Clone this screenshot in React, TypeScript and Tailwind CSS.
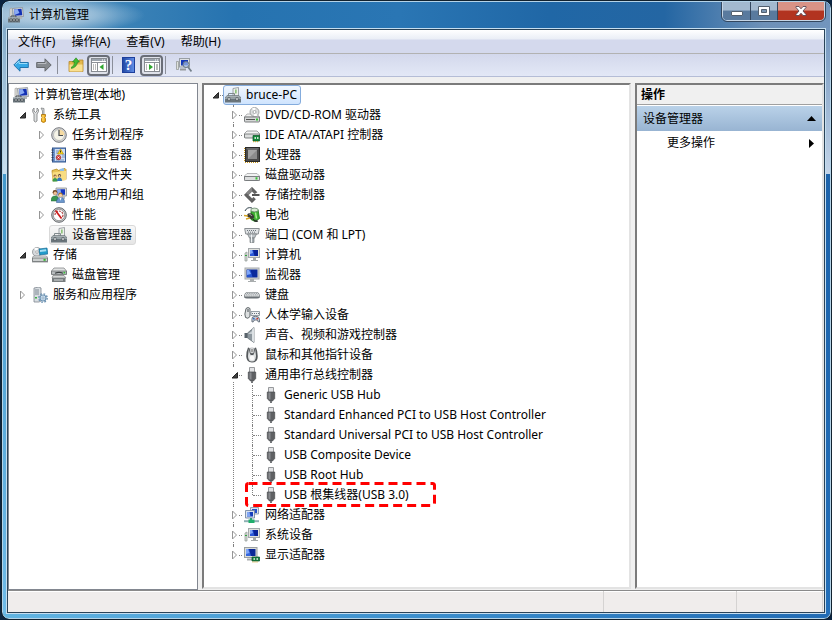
import { useState, type ReactNode } from "react";

type IconName = keyof typeof icons;

type TreeItem = {
  label: string;
  icon: IconName;
  children?: TreeItem[];
  open?: boolean;
  selected?: "gray" | "blue";
  marked?: boolean;
};

const bigScreen = (
  <>
    <rect x="1" y="1" width="14" height="11" fill="#d9dbd6" stroke="#a3a8ab" />
    <rect x="2.500" y="2.500" width="11" height="8" fill="#0a2a9c" />
    <path d="M3 3h3.500l2 7H3z" fill="#2453cf" />
    <path d="M3 3h2l2 4-4 1z" fill="#7fa6f8" />
    <path d="M6 12h4v2h2v1H4v-1h2z" fill="#a9adae" />
  </>
);

const towerScreen = (
  <>
    <rect x="4.500" y="1.500" width="11" height="9" fill="#dfe1dc" stroke="#a3a8ab" />
    <rect x="6" y="3" width="8" height="6" fill="#08239a" />
    <path d="M6 3h3l1.500 6H6z" fill="#2a58d8" />
    <path d="M6 3h2l1 3-3 1z" fill="#7fa6f8" />
    <path d="M9 11h3v2h2v1H7v-1h2z" fill="#a4a8a9" />
    <path d="M1 6l2-1v9H1z" fill="#d6dad4" stroke="#8e9592" strokeWidth=".7" />
    <path d="M1 8h2v1H1z" fill="#2fa83c" />
  </>
);

const manageIcon = (
  <>
    <path d="M2 1.500l2-.5v9H2z" fill="#e6e6e0" stroke="#a0a0a0" strokeWidth=".7" />
    <path d="M4.500 1.500l10-1 1 9-10 .5z" fill="#d9dcdf" stroke="#8b9096" strokeWidth=".8" />
    <path d="M6 2.500l7.500-.8.8 6.500-7.500.6z" fill="#1331b4" />
    <path d="M6 2.500l3.500-.4 2 4-5 2z" fill="#8aaaf2" />
    <path d="M11 10h3v2h-3z" fill="#b4b7b9" />
    <path d="M3 10.500V9h5v1.500" fill="none" stroke="#4b5358" />
    <path d="M0 10.500h12v5H0z" fill="#6b767c" />
    <path d="M0 11h12" stroke="#b7c0c5" />
    <path d="M2 12h2v2H2zM5 12h2v2H5zM8 12h2v2H8z" fill="#cfd6d9" stroke="#2c3337" strokeWidth=".5" />
  </>
);

const icons = {
  manage: manageIcon,
  tools: (
    <>
      <path d="M2 1v3l1.500 1.500L5 4V1q2 1 1.500 3.500L5 7v7q-1.500 2-3 0V7L.8 5Q0 2.500 2 1z" fill="#dfe1e2" stroke="#77797b" strokeWidth=".8" />
      <path d="M9 1l3 .5v6h-1.500V4z" fill="#d4d6d8" stroke="#797b7d" strokeWidth=".7" />
      <path d="M9.500 7.500h4v2l-.7 1 .7 1v3q-2 2-4 0v-3l.7-1-.7-1z" fill="#f2b11e" stroke="#a86f08" strokeWidth=".8" />
      <path d="M11 8v6" stroke="#ffe07a" />
    </>
  ),
  clock: (
    <>
      <circle cx="8" cy="8" r="7.300" fill="#d5d7d9" stroke="#77797d" />
      <circle cx="8" cy="8" r="5.500" fill="#f5f3e7" stroke="#a5a5a5" strokeWidth=".6" />
      <path d="M8 8V2.500a5.500 5.500 0 0 1 5.500 5.500z" fill="#f6dba2" />
      <path d="M8 3v5.500h4" fill="none" stroke="#454a50" strokeWidth="1.200" />
    </>
  ),
  log: (
    <>
      <rect x="1.500" y="1" width="13" height="14" fill="#6b91cb" stroke="#35588f" />
      <rect x="4" y="2" width="10" height="12" fill="#cfdef2" />
      <path d="M5 4h3M5 6h2M11 8h3M11 10h3M5 13h8" stroke="#6181b6" strokeWidth=".8" />
      <path d="M9.500 2l3 5h-6z" fill="#ffdb1d" stroke="#a98300" strokeWidth=".6" />
      <path d="M9.500 3.500v2" stroke="#222" strokeWidth=".9" />
      <circle cx="7.500" cy="10.500" r="2.300" fill="#d93838" stroke="#8d1616" strokeWidth=".5" />
      <path d="M6.500 9.500l2 2m0-2l-2 2" stroke="#fff" strokeWidth=".8" />
      <path d="M.5 3h2M.5 5.500h2M.5 8h2M.5 10.500h2M.5 13h2" stroke="#333f57" />
    </>
  ),
  share: (
    <>
      <path d="M1 3.500L6 2l1 1.500 7-2 1 1v10L2 14z" fill="#e8c354" stroke="#b58c22" strokeWidth=".8" />
      <path d="M9 2l4-1v3H9z" fill="#8fc0e8" />
      <path d="M1.500 5.500L15 3.800v9.200L1.500 14z" fill="#f8dd82" />
      <circle cx="4" cy="9" r="1.500" fill="#7a5227" />
      <circle cx="4.200" cy="9.500" r="1" fill="#efc6a0" />
      <path d="M1.500 14.500q0-3.500 2.500-3.500t2.500 3.500z" fill="#3a9b4c" />
      <circle cx="8.500" cy="8.500" r="1.500" fill="#523b28" />
      <circle cx="8.500" cy="9" r="1" fill="#efc6a0" />
      <path d="M6 14q0-3.500 2.500-3.500T11 14z" fill="#3476bd" />
    </>
  ),
  users: (
    <>
      <path d="M5 1h10.500v8H5z" fill="#d9dbdc" stroke="#8a8f95" strokeWidth=".8" />
      <path d="M6.500 2.300H14v5.500H6.500z" fill="#1538c2" />
      <path d="M6.500 2.300h3l1 5.500h-4z" fill="#8cabf2" />
      <path d="M11 9h3v3h-3z" fill="#b9bcbe" />
      <circle cx="4" cy="5.500" r="2.400" fill="#6d4523" />
      <circle cx="4.200" cy="6.300" r="1.700" fill="#eebf95" />
      <path d="M0 14q0-5 4-5t4 5z" fill="#3a9550" stroke="#1f6a35" strokeWidth=".5" />
      <circle cx="9.500" cy="7.800" r="2.200" fill="#a87729" />
      <circle cx="9.500" cy="8.400" r="1.600" fill="#f4cfa6" />
      <path d="M5.500 15.500q0-5 4-5t4 5z" fill="#6b97cc" stroke="#264f88" strokeWidth=".5" />
      <path d="M8.500 10.700h2l-1 3z" fill="#fff" />
    </>
  ),
  gauge: (
    <>
      <circle cx="8" cy="8" r="7.300" fill="#c9cccd" stroke="#65686b" />
      <circle cx="8" cy="8" r="5.700" fill="#fff" stroke="#6a6a6a" strokeWidth=".6" />
      <path d="M4 8a4 4 0 0 1 8 0M12 8a4 4 0 0 1-1.500 3" fill="none" stroke="#b04848" strokeWidth="1.200" strokeDasharray="2 1" />
      <path d="M4.500 3.500l6 8" stroke="#cc1c1c" strokeWidth="1.700" />
    </>
  ),
  devices: (
    <>
      <path d="M8 1.500L13.500.5V10H8z" fill="#eef0ee" stroke="#8b9194" strokeWidth=".8" />
      <rect x="10" y="2.500" width="1.700" height="4" fill="#8fc47c" />
      <path d="M3.500 9V6.500h6V9" fill="none" stroke="#818a8d" />
      <path d="M2 8.500h12l2 2.500H0z" fill="#a9b2b6" stroke="#6c757a" strokeWidth=".7" />
      <path d="M0 11h16v4.500H0z" fill="#6a757b" />
      <path d="M0 11.500h16" stroke="#98a3a8" />
      <path d="M3 10.500h2v3H3zM11 10.500h2v3h-2z" fill="#e1e5e6" stroke="#434c50" strokeWidth=".6" />
    </>
  ),
  storage: (
    <>
      <circle cx="5" cy="5" r="4.500" fill="#d7dadd" stroke="#8b9094" strokeWidth=".8" />
      <path d="M5 5L2 1.500Q4 .2 6 1z" fill="#fff" />
      <circle cx="5" cy="5" r="1.300" fill="#fff" stroke="#898989" strokeWidth=".6" />
      <path d="M7 2l8-1 .8 6-8 1z" fill="#239cca" stroke="#1a6c94" strokeWidth=".7" />
      <path d="M8 3l6-.7.300 2L8 5z" fill="#a9e0f4" />
      <path d="M2 9h12l2 1.500V15H0v-4.500z" fill="#eceded" stroke="#8e9193" strokeWidth=".8" />
      <path d="M.5 11h15v3.500H.5z" fill="#cccfcf" stroke="#6b6e70" strokeWidth=".8" />
      <rect x="11.500" y="11.800" width="2.200" height="2" fill="#35b832" />
    </>
  ),
  disk: (
    <>
      <path d="M3 1h10l2.500 3v3H.5V4z" fill="#e1e3e3" stroke="#85888a" strokeWidth=".8" />
      <path d="M.5 4h15v3.500H.5z" fill="#b8bcbe" stroke="#64686a" strokeWidth=".7" />
      <path d="M4 6.300q4-2 8 0" fill="none" stroke="#3c4042" strokeWidth="1.200" />
      <rect x="12.500" y="4.800" width="1.700" height="1.700" fill="#36bf36" />
      <path d="M2 8.500h11l2 2.500H1z" fill="#d5d7d7" stroke="#7c7f80" strokeWidth=".7" />
      <path d="M1 11h13.500v4H1z" fill="#777c7e" />
      <path d="M3 13h9" stroke="#d9dcdc" />
    </>
  ),
  services: (
    <>
      <path d="M2 1l5-1 2 1v13l-2 1H2z" fill="#d9dee2" stroke="#7d878f" strokeWidth=".8" />
      <path d="M3 3h4M3 5h4M3 7h4" stroke="#74808a" strokeWidth=".9" />
      <rect x="3" y="10" width="2" height="1.500" fill="#3fae45" />
      <circle cx="11" cy="11" r="3" fill="#cfe2f1" stroke="#6e93b3" strokeWidth="1.200" />
      <circle cx="11" cy="11" r="4.200" fill="none" stroke="#6e93b3" strokeWidth="1.400" strokeDasharray="1.700 1.600" />
      <circle cx="11" cy="11" r="1.100" fill="#fff" stroke="#5c83a5" strokeWidth=".6" />
    </>
  ),
  dvd: (
    <>
      <path d="M3 7h10l2.500 3H.5z" fill="#f2f2f2" stroke="#a3a5a6" strokeWidth=".8" />
      <circle cx="10.500" cy="5" r="4.500" fill="#dcdedf" stroke="#909496" strokeWidth=".8" />
      <path d="M10.500 5L8 1.500Q10 .5 11.500 1zM10.500 5l3 3.200Q12 9.500 10 9z" fill="#fff" />
      <circle cx="10.500" cy="5" r="1.500" fill="#fff" stroke="#8a8e90" strokeWidth=".7" />
      <path d="M.5 10h15v4.200q0 .8-.8.8H1.300q-.8 0-.8-.8z" fill="#d5d7d7" stroke="#6f7375" strokeWidth=".9" />
      <path d="M2 12.500h9" stroke="#555" />
      <rect x="12" y="11.500" width="2" height="2" fill="#35c235" />
    </>
  ),
  ide: (
    <>
      <path d="M3 4h10l2.500 2.500v4H.5v-4z" fill="#f2f2f2" stroke="#8b8e8f" strokeWidth=".8" />
      <path d="M.5 7h15v3q0 1-1 1h-13q-1 0-1-1z" fill="#dcdede" stroke="#66696a" strokeWidth=".8" />
      <path d="M9 8.500h6.500v5.500H9z" fill="#138a3b" stroke="#075423" strokeWidth=".7" />
      <path d="M10.500 10h1.500v2h-1.500zM13 10h1.500v2H13z" fill="#c9e3cf" />
      <path d="M9 14.700h6" stroke="#d8a524" strokeDasharray="1 1" />
    </>
  ),
  cpu: (
    <>
      <path d="M.5 1v14M1 15.300h14" stroke="#c9971c" strokeWidth="1.200" strokeDasharray="1 1" />
      <rect x="1.500" y=".5" width="14" height="14" fill="#4a4a4a" stroke="#2b2b2b" />
      <path d="M2 1h13l-3 3H5z" fill="#6b6b6b" />
      <rect x="4" y="3" width="9" height="9" fill="#8b8b8b" />
      <path d="M4 12V3h9z" fill="#a5a5a5" />
    </>
  ),
  drive: (
    <>
      <path d="M3 6.500h10l2.500 2.500v4.500H.5V9z" fill="#f1f2f2" stroke="#a3a5a6" strokeWidth=".8" />
      <path d="M.5 9.500h15v3.200q0 .8-.8.8H1.300q-.8 0-.8-.8z" fill="#dcdede" stroke="#6f7375" strokeWidth=".9" />
      <rect x="11.500" y="10.300" width="2" height="2.200" fill="#35c235" />
    </>
  ),
  controller: (
    <>
      <path d="M8 .3L.3 8 8 15.700l3.500-3.500-2-2L8 11.700 4.300 8 8 4.300l2.500 2.500 2.500-1.500z" fill="#626262" stroke="#454545" strokeWidth=".5" />
      <path d="M8 .3L2 6.300l2.500 1.500L8 4.300z" fill="#868686" />
      <path d="M8 7h7.500v2H8z" fill="#555" />
    </>
  ),
  battery: (
    <>
      <path d="M1 4Q3-.5 8 1" fill="none" stroke="#30404a" />
      <path d="M7 3.500l7-1 1.500 9-4.500 3-4-2z" fill="#3cae31" stroke="#187012" strokeWidth=".8" />
      <ellipse cx="10.500" cy="3" rx="3.700" ry="1.900" fill="#d9ecd4" stroke="#53765a" strokeWidth=".7" />
      <path d="M11.500 5.500l1 6" stroke="#a8ee92" strokeWidth="1.500" />
      <path d="M4 6.500q4-1 5.500 1.500T9 11.500q-2 1-3 0L2.500 9z" fill="#3a3935" />
      <path d="M5.500 7.500q2 0 2.500 1.500" stroke="#a5a5a0" fill="none" />
      <path d="M0 8.500l4 .5M2 12l4-1" stroke="#d6a524" strokeWidth="1.500" />
      <path d="M9 12q2 3 5 2" fill="none" stroke="#272727" strokeWidth="1.300" />
    </>
  ),
  port: (
    <>
      <path d="M.7 1.500h14.600l-1 5.500H1.700z" fill="#dfe2e4" stroke="#8a8f93" />
      <path d="M3 3.500h10M4 5.200h8" stroke="#6d757c" strokeDasharray="1 1" />
      <path d="M3.500 7h9l-2 4h-5z" fill="#bfc5c9" stroke="#787e82" strokeWidth=".8" />
      <path d="M6 11h4v4.500H6z" fill="#a3abb0" stroke="#777d80" strokeWidth=".7" />
      <path d="M7.500 7.500v8" stroke="#f1f3f4" />
    </>
  ),
  computer: towerScreen,
  monitor: bigScreen,
  keyboard: (
    <>
      <path d="M3 5h10q3 1 3 5.200-1 1.300-3 1.300H3Q1 11.500 0 10.200 0 6 3 5z" fill="#6c7277" />
      <path d="M3 5.500h10q2 1 2.500 4H.5Q1 6.500 3 5.500z" fill="#e3e5e6" />
      <path d="M3 6.500h10M2 7.800h12M1.500 9.100h13" stroke="#8f959a" strokeWidth=".9" strokeDasharray="1 .8" />
    </>
  ),
  hid: (
    <>
      <path d="M2 1.500Q4-.5 6 1.500v8q-2 3-4.500 1Q0 8 2 1.500z" fill="#dde0e1" stroke="#5f6669" />
      <path d="M4 2v3" stroke="#454b4e" />
      <path d="M7 4.500h8.500v4H7z" fill="#eef0f2" stroke="#7e8992" strokeWidth=".8" />
      <path d="M8 6.500h7" stroke="#6b7781" strokeDasharray="1 1" />
      <path d="M8.500 10q3-1.500 6 0 1.500 2 1 5-1.500.5-2.500-2h-2.500q-1 2.500-2.500 2-.5-3 .5-5z" fill="#c3cad2" stroke="#55616e" strokeWidth=".8" />
      <circle cx="9.800" cy="11.700" r=".9" fill="#2d66c9" />
      <circle cx="13.300" cy="11.700" r=".9" fill="#c93a31" />
    </>
  ),
  sound: (
    <>
      <path d="M.5 6h3v5h-3z" fill="#59636b" />
      <path d="M3.500 6L10 .5v15L3.500 11z" fill="#8d979e" stroke="#5e686f" strokeWidth=".7" />
      <path d="M8 2.500l2-2v15l-2-2z" fill="#dce1e4" />
      <path d="M4 7l4-3v3z" fill="#c7ced2" />
    </>
  ),
  mouse: (
    <>
      <path d="M4 .5Q2 5 2.300 10T8 15.500q5.500 0 5.700-5.500T12 .5L10.500 1 9.500 5h-3L5.500 1z" fill="#54585b" />
      <path d="M4.800 2L4 9q0 5.500 4 5.500T12 9l-.8-7-.9 4-1 2H6.700l-1-2z" fill="#dfe1e2" />
      <path d="M6.500 1h3v5h-3z" fill="#eceded" stroke="#9a9ea1" strokeWidth=".6" />
      <path d="M8 2v3" stroke="#555" />
      <circle cx="8" cy="11" r="2.300" fill="#fafafa" />
    </>
  ),
  usb: (
    <>
      <path d="M5.500.5h5v5h-5z" fill="#e2e3e5" stroke="#8c8e92" strokeWidth=".9" />
      <path d="M4.300 5h7.400v6.500L9.500 14h-3l-2.200-2.500z" fill="#5f6164" stroke="#494b4e" strokeWidth=".7" />
      <path d="M5.500 5.500h2v7h-1l-1-1z" fill="#898b8f" />
      <path d="M7 14h2v2H7z" fill="#747679" />
    </>
  ),
  network: (
    <>
      <path d="M6.500.5h8v6.500h-8z" fill="#dce4ef" stroke="#8697ad" strokeWidth=".9" />
      <path d="M8 2h5v4H8z" fill="#2350cb" />
      <path d="M1.500 3.500h9v7.500h-9z" fill="#dce4ef" stroke="#7789a2" strokeWidth=".9" />
      <path d="M3 5h6v4.500H3z" fill="#163fba" />
      <path d="M3 5h2.500l1 4.500H3z" fill="#81a6f4" />
      <path d="M7 11v2" stroke="#2f9d72" strokeWidth="2" />
      <path d="M0 14.200h15" stroke="#8fb0b3" strokeWidth="2" />
      <path d="M4.500 12.500h6V16h-6z" fill="#1fae6c" />
    </>
  ),
  display: (
    <>
      <rect x=".5" y=".5" width="12.500" height="10" fill="#dcded9" stroke="#9a9fa1" />
      <rect x="2" y="2" width="9.500" height="7" fill="#0b2798" />
      <path d="M2 2h3l2 7H2z" fill="#3565dc" />
      <path d="M2 2h2l1.500 4L2 7z" fill="#7fa6f8" />
      <path d="M3 11.500h5v2H3z" fill="#a9adae" />
      <path d="M8 10h7.500v4H8z" fill="#168343" stroke="#095025" strokeWidth=".7" />
      <path d="M9.500 11h1.500v2H9.500zM12.500 11H14v2h-1.500z" fill="#bcd3bf" />
      <path d="M8.500 15h6" stroke="#d2a025" strokeDasharray="1 1" />
    </>
  ),
};

const consoleTree: TreeItem[] = [
  {
    label: "系统工具",
    icon: "tools",
    open: true,
    children: [
      { label: "任务计划程序", icon: "clock", children: [] },
      { label: "事件查看器", icon: "log", children: [] },
      { label: "共享文件夹", icon: "share", children: [] },
      { label: "本地用户和组", icon: "users", children: [] },
      { label: "性能", icon: "gauge", children: [] },
      { label: "设备管理器", icon: "devices", selected: "gray" },
    ],
  },
  {
    label: "存储",
    icon: "storage",
    open: true,
    children: [{ label: "磁盘管理", icon: "disk" }],
  },
  { label: "服务和应用程序", icon: "services", children: [] },
];

const deviceTree: TreeItem = {
  label: "bruce-PC",
  icon: "devices",
  open: true,
  selected: "blue",
  children: [
    { label: "DVD/CD-ROM 驱动器", icon: "dvd", children: [] },
    { label: "IDE ATA/ATAPI 控制器", icon: "ide", children: [] },
    { label: "处理器", icon: "cpu", children: [] },
    { label: "磁盘驱动器", icon: "drive", children: [] },
    { label: "存储控制器", icon: "controller", children: [] },
    { label: "电池", icon: "battery", children: [] },
    { label: "端口 (COM 和 LPT)", icon: "port", children: [] },
    { label: "计算机", icon: "computer", children: [] },
    { label: "监视器", icon: "monitor", children: [] },
    { label: "键盘", icon: "keyboard", children: [] },
    { label: "人体学输入设备", icon: "hid", children: [] },
    { label: "声音、视频和游戏控制器", icon: "sound", children: [] },
    { label: "鼠标和其他指针设备", icon: "mouse", children: [] },
    {
      label: "通用串行总线控制器",
      icon: "usb",
      open: true,
      children: [
        { label: "Generic USB Hub", icon: "usb" },
        { label: "Standard Enhanced PCI to USB Host Controller", icon: "usb" },
        { label: "Standard Universal PCI to USB Host Controller", icon: "usb" },
        { label: "USB Composite Device", icon: "usb" },
        { label: "USB Root Hub", icon: "usb" },
        { label: "USB 根集线器(USB 3.0)", icon: "usb", marked: true },
      ],
    },
    { label: "网络适配器", icon: "network", children: [] },
    { label: "系统设备", icon: "computer", children: [] },
    { label: "显示适配器", icon: "display", children: [] },
  ],
};

function Icon({ name }: { name: IconName }) {
  return (
    <svg viewBox="0 0 16 16" className="size-4 shrink-0" aria-hidden="true">
      {icons[name]}
    </svg>
  );
}

function ItemLabel({ item }: { item: TreeItem }) {
  const look =
    item.selected === "gray"
      ? "border-[#d9d9d9] bg-linear-to-b from-[#f8f8f8] to-[#e5e5e5]"
      : item.selected === "blue"
        ? "border-[#84acdd] bg-linear-to-b from-[#f1f7fe] to-[#cfe4fe]"
        : "border-transparent";
  return (
    <button
      type="button"
      className={`flex h-5 items-center gap-[5px] rounded-[3px] border pl-px pr-[3px] whitespace-nowrap ${look}`}
    >
      <Icon name={item.icon} />
      {item.label}
    </button>
  );
}

function Arrow({ open }: { open: boolean }) {
  return (
    <svg viewBox="0 0 9 10" className="h-2.5 w-[9px]" aria-hidden="true">
      {open ? (
        <path d="M7.500 2.500v5.500H2z" fill="#404040" stroke="#262626" />
      ) : (
        <path d="M2.500 1v8l4-4z" fill="#fff" stroke="#969696" />
      )}
    </svg>
  );
}

function TreeNode({ item, lines, root }: { item: TreeItem; lines?: boolean; root?: boolean }) {
  const [open, setOpen] = useState(!!item.open);
  const dots =
    lines && !root
      ? "before:absolute before:left-2 before:top-0 before:h-full before:border-l before:border-dotted before:border-[#808080] last:before:h-2.5"
      : "";
  return (
    <li className={`relative ${dots}`}>
      <div className="flex h-5 items-center">
        <span className="relative flex w-[17px] shrink-0 items-center">
          {item.children ? (
            <button
              type="button"
              aria-label={item.label}
              aria-expanded={open}
              onClick={() => setOpen(!open)}
              className="ml-[5px] bg-white py-0.5"
            >
              <Arrow open={open} />
            </button>
          ) : (
            <span className="w-[9px]" />
          )}
          {lines && <span className="flex-1 border-t border-dotted border-[#808080]" />}
        </span>
        <ItemLabel item={item} />
      </div>
      {item.marked && (
        <svg className="pointer-events-none absolute left-0 -top-1 z-10 h-7 w-[193px]" aria-hidden="true">
          <rect
            x="2.500"
            y="2.500"
            width="188"
            height="22"
            rx="2"
            fill="none"
            stroke="#f00"
            strokeWidth="3"
            strokeDasharray="9 5"
          />
        </svg>
      )}
      {open && item.children && item.children.length > 0 && (
        <ul className="pl-[19px]">
          {item.children.map((child) => (
            <TreeNode key={child.label} item={child} lines={lines} />
          ))}
        </ul>
      )}
    </li>
  );
}

function ToolButton({ label, pressed, children }: { label: string; pressed?: boolean; children: ReactNode }) {
  return (
    <button
      type="button"
      aria-label={label}
      className={`flex h-[21px] w-[23px] items-center justify-center rounded-[4px] ${
        pressed ? "border-2 border-[#6a6e78] bg-[#dfe2ea]" : ""
      }`}
    >
      {children}
    </button>
  );
}

function Separator() {
  return <span className="mx-0.5 h-[18px] w-px bg-[#8b8f9a]" />;
}

function PaneIcon({ flip }: { flip?: boolean }) {
  return (
    <svg viewBox="0 0 16 14" className="h-3.5 w-4 shrink-0" aria-hidden="true">
      <rect x=".5" y=".5" width="15" height="13" fill="#fff" stroke="#878b91" />
      <path d="M1 2h14" stroke="#9ba3ad" strokeWidth="2" />
      <path d="M11 2h3" stroke="#fff" strokeDasharray="1 1" />
      <path d="M1 4.500h14" stroke="#8c9097" />
      {flip ? (
        <>
          <path d="M10.500 5v8" stroke="#8c9097" />
          <path d="M12 7h2M12 9h2M12 11h2M2 7h1M2 9h1M2 11h1" stroke="#777" />
          <path d="M5 6v6l4-3z" fill="#30a630" />
        </>
      ) : (
        <>
          <path d="M6.500 5v8" stroke="#8c9097" />
          <path d="M2 7h1M4 7h1M2 9h1M4 9h1M2 11h1M4 11h1" stroke="#777" />
          <path d="M12.500 6v6L8.500 9z" fill="#30a630" />
        </>
      )}
    </svg>
  );
}

function Toolbar() {
  return (
    <div className="flex h-[23px] items-center border-b border-[#b5bdd6] bg-linear-to-b from-[#d3d8ec] to-[#e3e8f6] pl-px">
      <ToolButton label="后退">
        <svg viewBox="0 0 16 14" className="h-3.5 w-4" aria-hidden="true">
          <path d="M.8 7L7 .8v3.700h8.300v5H7v3.700z" fill="#35a8e6" stroke="#2374ad" />
          <path d="M2.500 6.500L6 3v2.500h8.300" fill="none" stroke="#9bdcf9" />
        </svg>
      </ToolButton>
      <ToolButton label="前进">
        <svg viewBox="0 0 16 14" className="h-3.5 w-4" aria-hidden="true">
          <path d="M15.200 7L9 .8v3.700H.7v5H9v3.700z" fill="#868a8f" stroke="#65696e" />
          <path d="M1.700 5.500H10V3.500" fill="none" stroke="#b8bbc0" />
        </svg>
      </ToolButton>
      <Separator />
      <span className="w-1" />
      <ToolButton label="向上">
        <svg viewBox="0 0 16 16" className="size-4" aria-hidden="true">
          <path d="M1 4.500h5l1 1.500h3l1-3h4v11.500H1z" fill="#e5b84c" stroke="#b4872a" strokeWidth=".8" />
          <path d="M1.500 7.500h13v7h-13z" fill="#fae08f" />
          <path d="M3.500 10q3-1 3-5H4.500L8 .8 11.500 5h-2q-.5 5-6 6.500z" fill="#45bc32" stroke="#24831a" strokeWidth=".6" />
        </svg>
      </ToolButton>
      <ToolButton label="控制台树" pressed>
        <PaneIcon />
      </ToolButton>
      <Separator />
      <span className="w-0.5" />
      <ToolButton label="帮助">
        <span className="flex h-4 w-[13px] items-center justify-center border border-[#1d3f9c] bg-linear-to-r from-[#234aa5] to-[#5f8ce6] font-['Liberation_Serif',serif] text-[15px] font-bold leading-none text-white">
          ?
        </span>
      </ToolButton>
      <ToolButton label="操作窗格" pressed>
        <PaneIcon flip />
      </ToolButton>
      <Separator />
      <span className="w-1" />
      <ToolButton label="扫描硬件改动">
        <svg viewBox="0 0 16 16" className="size-4" aria-hidden="true">
          <path d="M.5 4.500h2v8h-2z" fill="#dfe2dd" stroke="#8b918c" strokeWidth=".7" />
          <rect x="3.500" y="1.500" width="10" height="8.500" fill="#dfe2e4" stroke="#999fa4" />
          <rect x="5" y="3" width="7" height="5.500" fill="#1438b9" />
          <path d="M4 12.500h6" stroke="#96999c" strokeWidth="2" />
          <circle cx="10" cy="7.500" r="3" fill="#bcd5f1" fillOpacity=".6" stroke="#687786" />
          <path d="M12 10l3.500 4.500" stroke="#74808a" strokeWidth="1.800" />
        </svg>
      </ToolButton>
    </div>
  );
}

function TitleBar() {
  return (
    <header className="flex h-[26px] items-start bg-[linear-gradient(90deg,#7fa9c8_0%,#6d9ec2_5%,#3c83b7_14%,#2673b0_28%,#2a76b4_48%,#2067a6_66%,#2466a3_80%,#6e91b8_92%,#7295bd_100%)]">
      <div className="flex h-[26px] flex-1 items-center gap-[5px] bg-[radial-gradient(ellipse_90px_18px_at_52px_13px,#d3e3efcc,#d3e3ef88_45%,transparent)] pl-[5px]">
        <Icon name="manage" />
        <h1>计算机管理</h1>
      </div>
      <div className="mr-[5px] flex h-[19px] overflow-hidden rounded-b-[5px] border border-t-0 border-[#c5d5e5] outline outline-[#33475f]">
        <button
          type="button"
          aria-label="最小化"
          className="flex w-7 items-center justify-center border-r border-[#33475f] bg-linear-to-b from-[#a3b9cf] from-45% to-[#597a9e] to-50% pt-1"
        >
          <span className="h-[5px] w-3 rounded-[1px] border border-[#53606f] bg-white" />
        </button>
        <button
          type="button"
          aria-label="最大化"
          className="flex w-[27px] items-center justify-center border-r border-[#33475f] bg-linear-to-b from-[#a3b9cf] from-45% to-[#597a9e] to-50%"
        >
          <svg viewBox="0 0 12 10" className="h-2.5 w-3" aria-hidden="true">
            <path d="M.5.5h11v9H.5z" fill="#fff" stroke="#53606f" />
            <path d="M3.500 3.500h5v3h-5z" fill="#7894b1" stroke="#53606f" />
          </svg>
        </button>
        <button
          type="button"
          aria-label="关闭"
          className="flex w-[46px] items-center justify-center bg-linear-to-b from-[#d99386] from-45% to-[#b23420] to-50%"
        >
          <svg viewBox="0 0 12 10" className="h-2.5 w-3" aria-hidden="true">
            <path d="M1 .5h3l2 2.300L8 .5h3v1L8 5l3 3.500v1H8L6 7.200 4 9.500H1v-1L4 5 1 1.500z" fill="#fff" stroke="#5b4a55" strokeWidth=".9" />
          </svg>
        </button>
      </div>
    </header>
  );
}

export default function App() {
  return (
    <div className="h-screen min-h-[600px] overflow-hidden bg-[#0b2440] pl-px font-['Noto_Sans','Noto_Sans_CJK_SC',sans-serif] text-xs leading-5 text-black">
      <div className="h-full overflow-hidden rounded-lg border border-[#12222f]">
        <div className="flex h-full flex-col overflow-hidden rounded-[7px] border border-[#b4d3e8] bg-linear-to-r from-[#62b5e2] via-[#3c8fcd] to-[#216bb4]">
          <TitleBar />
          <div className="flex min-h-0 flex-1 pb-1">
            <div className="flex w-[3px] shrink-0 flex-col">
              <span className="h-[146px] bg-linear-to-b from-[#83abc9] to-[#c9dfef]" />
              <span className="flex-1 bg-linear-to-b from-[#4398cb] to-[#6fbbe8]" />
            </div>
            <div className="flex min-w-0 flex-1 flex-col border border-[#c5def0]">
              <div className="flex min-h-0 flex-1 flex-col border border-[#2a4358] bg-[#f0f0f0]">
                <nav className="flex h-6 items-center border-b border-[#b2b2b2] bg-[linear-gradient(180deg,#fff_0px,#eaeef6_9px,#d4d9ed_10px,#d4d9ed_100%)] pl-0.5">
                  {["文件(F)", "操作(A)", "查看(V)", "帮助(H)"].map((menu) => (
                    <button key={menu} type="button" className="px-2">
                      {menu}
                    </button>
                  ))}
                </nav>
                <Toolbar />
                <main className="mt-1.5 grid min-h-0 flex-1 grid-cols-[190px_minmax(0,1fr)_189px] gap-1">
                  <section className="overflow-hidden border border-[#828790] bg-white pt-px">
                    <div className="pl-0.5">
                      <ItemLabel item={{ label: "计算机管理(本地)", icon: "manage" }} />
                    </div>
                    <ul className="pl-1">
                      {consoleTree.map((item) => (
                        <TreeNode key={item.label} item={item} />
                      ))}
                    </ul>
                  </section>
                  <section className="mb-px overflow-hidden border-2 border-b-[#e3e3e3] border-l-[#7b7b7b] border-r-[#e3e3e3] border-t-[#7b7b7b] bg-white pl-0.5">
                    <ul>
                      <TreeNode item={deviceTree} lines root />
                    </ul>
                  </section>
                  <aside className="mb-px overflow-hidden border-2 border-b-[#e3e3e3] border-l-[#7b7b7b] border-r-[#e3e3e3] border-t-[#7b7b7b] bg-white">
                    <h2 className="h-5 border-b border-[#a0a0a0] bg-[#f0f0f0] pl-1 font-bold">操作</h2>
                    <button
                      type="button"
                      className="mt-px flex h-[25px] w-full items-center justify-between bg-linear-to-b from-[#bad2e9] to-[#98b4d2] px-1.5"
                    >
                      设备管理器
                      <svg viewBox="0 0 9 5" className="h-[5px] w-[9px]" aria-hidden="true">
                        <path d="M0 5l4.500-5L9 5z" />
                      </svg>
                    </button>
                    <button type="button" className="flex h-6 w-full items-center justify-between pl-[30px] pr-2">
                      更多操作
                      <svg viewBox="0 0 5 9" className="h-[9px] w-[5px]" aria-hidden="true">
                        <path d="M0 0l5 4.500L0 9z" />
                      </svg>
                    </button>
                  </aside>
                </main>
                <footer className="flex h-[22px] shrink-0 border-t border-[#8a8a8a] bg-[#f0edec] pr-px shadow-[inset_0_1px_#fff]">
                  <span className="flex-1 border-r border-[#d5d3d2]" />
                  <span className="w-[133px] border-r border-[#d5d3d2]" />
                  <span className="w-[86px] border-r border-[#d5d3d2]" />
                </footer>
              </div>
            </div>
            <div className="flex w-1 shrink-0 flex-col">
              <span className="h-[146px] bg-linear-to-b from-[#7295bd] to-[#c3d4e8]" />
              <span className="flex-1 bg-linear-to-b from-[#1c63ab] to-[#236fb9]" />
            </div>
          </div>
        </div>
      </div>
    </div>
  );
}
